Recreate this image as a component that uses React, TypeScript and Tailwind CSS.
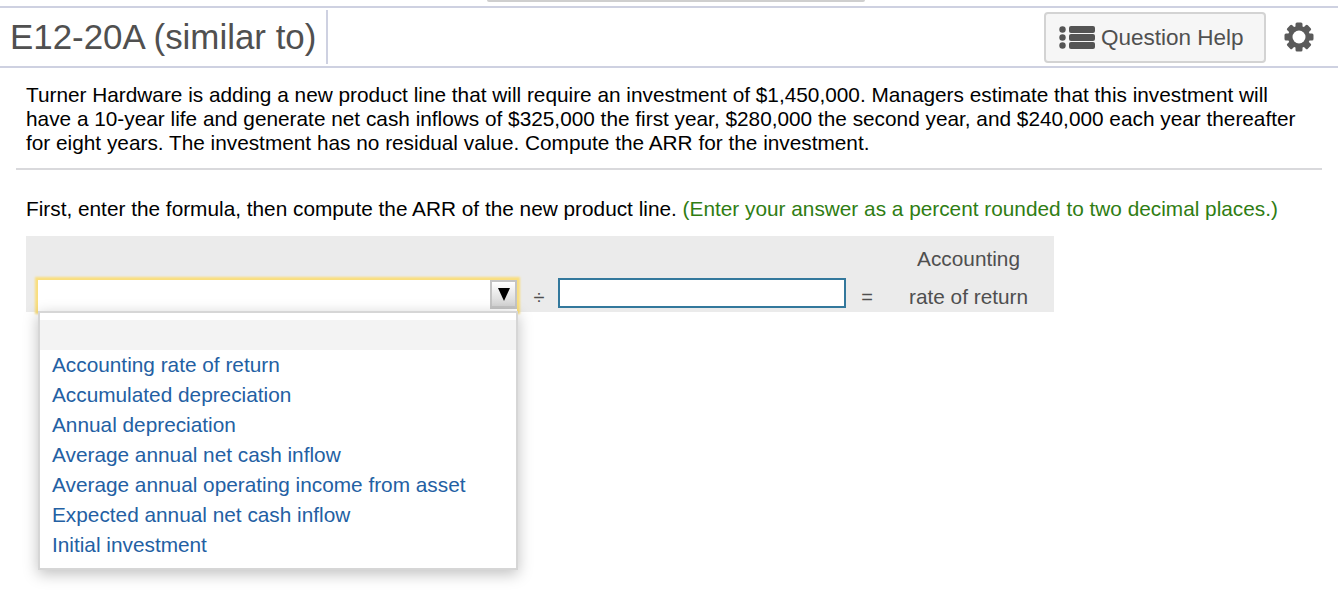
const items = [
  "Accounting rate of return",
  "Accumulated depreciation",
  "Annual depreciation",
  "Average annual net cash inflow",
  "Average annual operating income from asset",
  "Expected annual net cash inflow",
  "Initial investment",
];

function ListIcon() {
  return (
    <svg width="36" height="23" viewBox="0 0 36 23" fill="#545454">
      <circle cx="3.5" cy="3.5" r="3.2" />
      <circle cx="3.5" cy="11.5" r="3.2" />
      <circle cx="3.5" cy="19.5" r="3.2" />
      <rect x="10" y="0" width="26" height="7" rx="2" />
      <rect x="10" y="8" width="26" height="7" rx="2" />
      <rect x="10" y="16" width="26" height="7" rx="2" />
    </svg>
  );
}

function Gear() {
  return (
    <svg width="30" height="30" viewBox="0 0 30 30">
      <g fill="#5a5a5a">
        {[0, 45, 90, 135].map((a) => (
          <rect key={a} x="11.5" y="0.5" width="7" height="29" rx="1.5" transform={`rotate(${a} 15 15)`} />
        ))}
        <circle cx="15" cy="15" r="11" />
      </g>
      <circle cx="15" cy="15" r="6.5" fill="#fff" />
    </svg>
  );
}

export default function App() {
  return (
    <div className="relative h-[616px] w-[1338px] overflow-hidden bg-white font-['Liberation_Sans',Arial,sans-serif]">
      <div className="absolute left-[487px] top-0 h-[2px] w-[378px] rounded-b-sm bg-[#cfcfcf]" />
      <div className="pt-[6px]">
        <header className="flex h-[62px] items-center border-y-2 border-[#ced1e1] pr-[24px]">
          <h1 className="pl-[10px] text-[34.9px] font-normal leading-[54px] text-[#505050]">E12-20A (similar to)</h1>
          <div className="ml-[10px] h-[54px] w-[2px] bg-[#ced1e1]" />
          <div className="ml-auto flex items-center gap-[18px]">
            <button className="flex h-[51px] w-[222px] items-center gap-[6px] rounded-[4px] border-2 border-[#d3d3d3] bg-[#f6f6f6] pl-[13px] text-[22.5px] text-[#505050]">
              <ListIcon />
              <span className="pt-[2px]">Question Help</span>
            </button>
            <Gear />
          </div>
        </header>

        <main className="px-[16px]">
          <p className="px-[10px] pt-[15px] text-[20.8px] leading-[24px] text-black">
            Turner Hardware is adding a new product line that will require an investment of $1,450,000. Managers estimate that this investment will have a 10-year life and generate net cash inflows of $325,000 the first year, $280,000 the second year, and $240,000 each year thereafter for eight years. The investment has no residual value. Compute the ARR for the investment.
          </p>
          <div className="mt-[13px] h-[2px] bg-[#d9d9dc]" />
          <p className="whitespace-nowrap px-[10px] pt-[27px] text-[20.8px] leading-[24px] text-black">
            First, enter the formula, then compute the ARR of the new product line.{" "}
            <span className="text-[#2f7d13]">(Enter your answer as a percent rounded to two decimal places.)</span>
          </p>

          <div className="ml-[10px] mt-[15px] h-[76px] w-[1028px] bg-[#ebebeb] text-[20.8px] text-[#4f4f4f]">
            <div className="h-[42px] pr-[34px] pt-[8px] text-right leading-[30px]">Accounting</div>
            <div className="flex h-[34px] items-start">
              <div className="relative ml-[12px] mt-[2px] h-[31px] w-[479px] bg-white shadow-[0_0_2px_3px_#f9de7e]">
                <div className="absolute right-0 top-0 flex h-[29px] w-[27px] items-center justify-center border-x-2 border-t-2 border-b-[3px] border-[#c4c4c4] bg-gradient-to-b from-white to-[#d4d4d4]">
                  <svg width="12" height="13" viewBox="0 0 12 13" fill="#000">
                    <path d="M0 0H12L6 13Z" />
                  </svg>
                </div>
              </div>
              <span className="ml-[15px] mr-[12px] mt-[4px] w-[14px] text-center text-[20px] leading-[30px]">÷</span>
              <div className="h-[30px] w-[288px] border-2 border-[#33789c] bg-white" />
              <span className="ml-[15px] mt-[4px] w-[12px] text-center text-[20px] leading-[30px]">=</span>
              <span className="ml-[36px] mt-[4px] leading-[30px]">rate of return</span>
            </div>
          </div>
        </main>
      </div>

      <div className="absolute left-[38px] top-[311px] h-[259px] w-[480px] border-2 border-[#d6d6d6] bg-white pt-[7px] shadow-[0_4px_14px_rgba(0,0,0,0.25)]">
        <div className="h-[30px] bg-[#f3f3f3]" />
        <ul className="text-[20.8px] leading-[30px] text-[#2360a3]">
          {items.map((t) => (
            <li key={t} className="pl-[12px]">{t}</li>
          ))}
        </ul>
      </div>
    </div>
  );
}
